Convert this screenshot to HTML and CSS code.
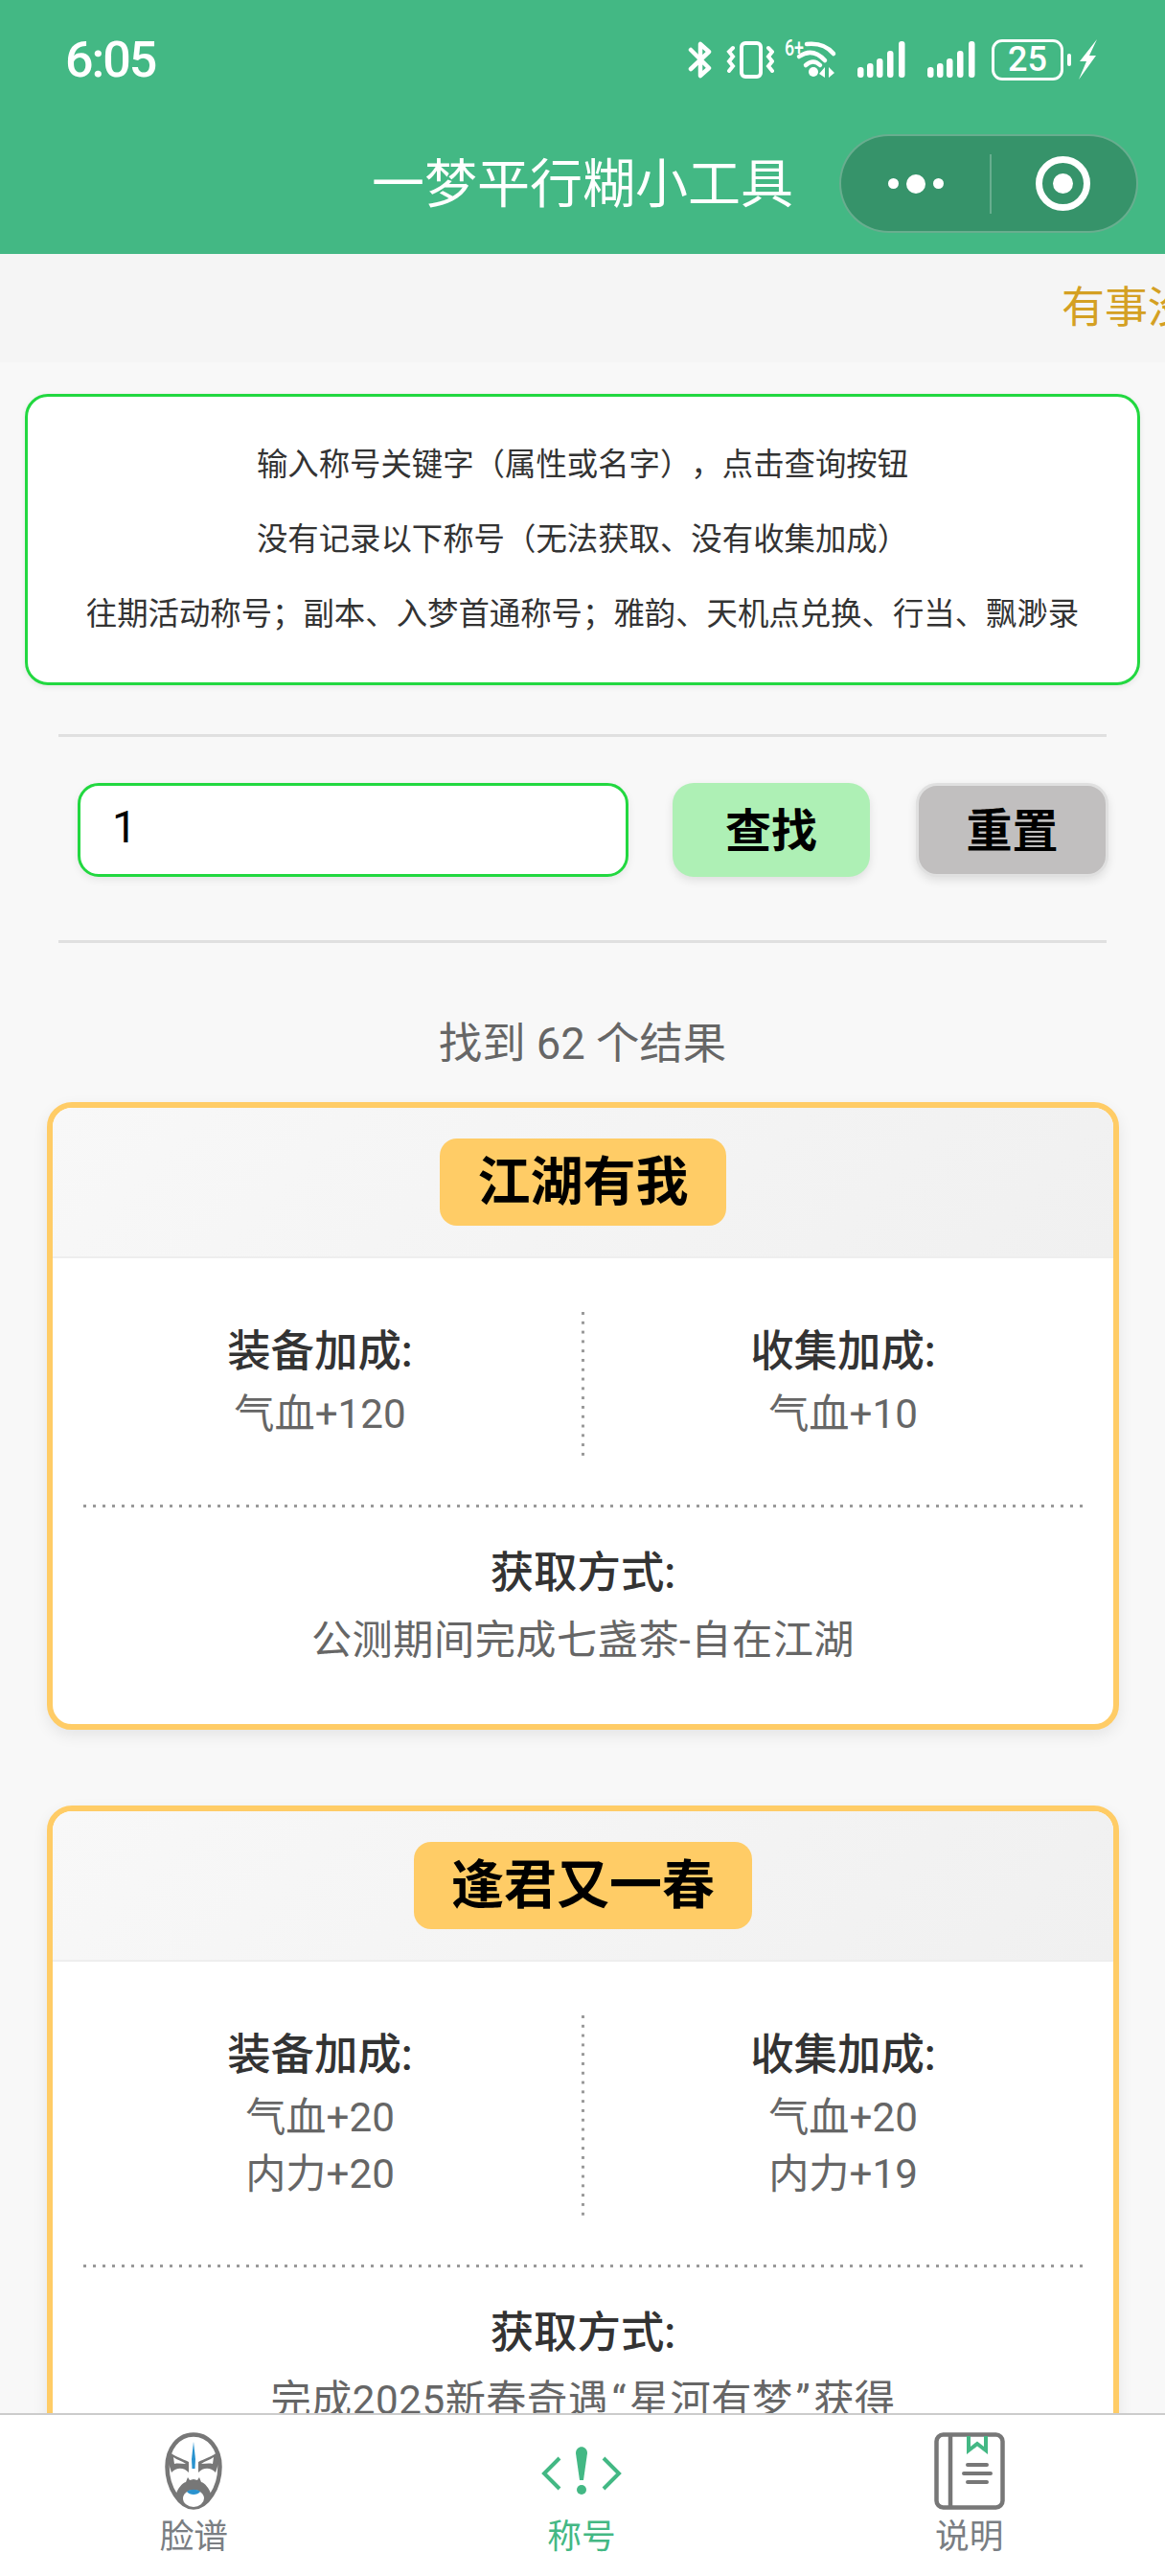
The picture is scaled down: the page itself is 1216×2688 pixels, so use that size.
FILE: index.html
```html
<!DOCTYPE html>
<html lang="zh-CN">
<head>
    <meta charset="UTF-8">
    <meta name="viewport" content="width=device-width, initial-scale=1.0">
    <title>一梦平行糊小工具</title>
    <link rel="stylesheet" href="styles.css">
</head>
<body>
    <div class="app">
        <header class="top">
            <div class="status">
                <span class="time">6:05</span>
                <div class="status-icons">
                    <svg class="ic-bt" width="25" height="42" viewBox="0 0 25 42" fill="none" stroke="#fff" stroke-width="4.5" stroke-linejoin="round" stroke-linecap="round">
                        <path d="M3 11 L22 30 L13 38 V24"/>
                        <path d="M3 31 L22 13 L13 5 V18"/>
                    </svg>
                    <svg class="ic-vib" width="50" height="42" viewBox="0 0 50 42" fill="none" stroke="#fff" stroke-width="4" stroke-linecap="round">
                        <rect x="16" y="4" width="20" height="35" rx="4"/>
                        <path d="M7 9 L3 13 L7 18 L3 23 L7 28 L3 33"/>
                        <path d="M44 9 L48 13 L44 18 L48 23 L44 28 L48 33"/>
                    </svg>
                    <svg class="ic-wifi" width="56" height="42" viewBox="0 0 56 42" fill="none" stroke="#fff" stroke-linecap="round">
                        <text x="1" y="17" class="wifi-six" textLength="20" lengthAdjust="spacingAndGlyphs">6+</text>
                        <path d="M24 5 Q42 3 52 15" stroke-width="4.5"/>
                        <path d="M16 18 Q30 8 43 22" stroke-width="4.5"/>
                        <path d="M23 27 Q31 20 38 27" stroke-width="4.5"/>
                        <circle cx="31" cy="34" r="5" fill="#fff" stroke="none"/>
                        <path d="M43 29 V40 L37 36Z M47 29 V40 L53 35Z" fill="#fff" stroke="none"/>
                    </svg>
                    <svg class="ic-sig" width="50" height="42" viewBox="0 0 50 42" fill="#fff">
                        <rect x="0" y="29" width="6.5" height="11" rx="3"/>
                        <rect x="10" y="25" width="6.5" height="15" rx="3"/>
                        <rect x="20" y="20" width="6.5" height="20" rx="3"/>
                        <rect x="31" y="12" width="6.5" height="28" rx="3"/>
                        <rect x="43" y="2" width="6.5" height="38" rx="3"/>
                    </svg>
                    <svg class="ic-sig" width="50" height="42" viewBox="0 0 50 42" fill="#fff">
                        <rect x="0" y="29" width="6.5" height="11" rx="3"/>
                        <rect x="10" y="25" width="6.5" height="15" rx="3"/>
                        <rect x="20" y="20" width="6.5" height="20" rx="3"/>
                        <rect x="31" y="12" width="6.5" height="28" rx="3"/>
                        <rect x="43" y="2" width="6.5" height="38" rx="3"/>
                    </svg>
                    <div class="battery">25</div>
                    <span class="battery-nub"></span>
                    <svg class="ic-bolt" width="20" height="42" viewBox="0 0 20 42" fill="#fff">
                        <path d="M20 0 L2 23 H9 L1 42 L19 17 H12 Z"/>
                    </svg>
                </div>
            </div>
            <div class="nav">
                <h1 class="nav-title">一梦平行糊小工具</h1>
                <div class="capsule">
                    <div class="capsule-dots">
                        <i class="dot"></i><i class="dot big"></i><i class="dot"></i>
                    </div>
                    <div class="capsule-sep"></div>
                    <div class="capsule-close"><i></i></div>
                </div>
            </div>
        </header>

        <main class="content">
            <div class="notice">有事没事多来看看公告</div>

            <div class="info">
                <p>输入称号关键字（属性或名字），点击查询按钮</p>
                <p>没有记录以下称号（无法获取、没有收集加成）</p>
                <p>往期活动称号；副本、入梦首通称号；雅韵、天机点兑换、行当、飘渺录</p>
            </div>

            <div class="line line-top"></div>
            <div class="search">
                <div class="search-input">1</div>
                <button class="btn btn-find">查找</button>
                <button class="btn btn-reset">重置</button>
            </div>
            <div class="line"></div>

            <div class="result-count">找到 62 个结果</div>

            <section class="card">
                <div class="card-head"><span class="badge">江湖有我</span></div>
                <div class="stats">
                    <div class="stat">
                        <div class="label">装备加成:</div>
                        <div class="value">气血+120</div>
                    </div>
                    <div class="stat">
                        <div class="label">收集加成:</div>
                        <div class="value">气血+10</div>
                    </div>
                </div>
                <div class="source">
                    <div class="label">获取方式:</div>
                    <div class="value source-text">公测期间完成七盏茶-自在江湖</div>
                </div>
            </section>

            <section class="card">
                <div class="card-head"><span class="badge">逢君又一春</span></div>
                <div class="stats">
                    <div class="stat">
                        <div class="label">装备加成:</div>
                        <div class="value">气血+20</div>
                        <div class="value">内力+20</div>
                    </div>
                    <div class="stat">
                        <div class="label">收集加成:</div>
                        <div class="value">气血+20</div>
                        <div class="value">内力+19</div>
                    </div>
                </div>
                <div class="source">
                    <div class="label">获取方式:</div>
                    <div class="value source-text">完成2025新春奇遇<span class="quote">“</span>星河有梦<span class="quote">”</span>获得</div>
                </div>
            </section>
        </main>

        <nav class="tabs">
            <div class="tab">
                <svg width="60" height="81" viewBox="0 0 60 81">
                    <path d="M30 2.5 C46 2.5 57.5 17 57.5 36 C57.5 58 44 78.5 30 78.5 C16 78.5 2.5 58 2.5 36 C2.5 17 14 2.5 30 2.5Z" fill="#fff" stroke="#777" stroke-width="4.5"/>
                    <path d="M4 20 C10 25 19 28 25 31 L25 42 C20 37 13 36 7 42 C4 34 3 27 4 20Z" fill="#777"/>
                    <path d="M56 20 C50 25 41 28 35 31 L35 42 C40 37 47 36 53 42 C56 34 57 27 56 20Z" fill="#777"/>
                    <path d="M9 26 C13 29 18 30 22 33 C18 33 14 32 10 33Z M51 26 C47 29 42 30 38 33 C42 33 46 32 50 33Z" fill="#fff"/>
                    <path d="M12 40 C16 37 20 38 23 42 C19 44 15 43 12 40Z M48 40 C44 37 40 38 37 42 C41 44 45 43 48 40Z" fill="#fff"/>
                    <path d="M30 10 L32 28 L31.5 38 H28.5 L28 28Z" fill="#2a93cf"/>
                    <path d="M11 66 C14 58 18 53 22 52 L24 47 L26 50 L30 49 L34 50 L36 47 L38 52 C42 53 46 58 49 66 C47 71 44 74 41 75 L19 75 C16 74 13 71 11 66Z" fill="#777"/>
                    <ellipse cx="30" cy="69" rx="11" ry="9" fill="#fff"/>
                    <path d="M23 62 C26 59 34 59 37 62 C34 66 26 66 23 62Z" fill="#2a93cf"/>
                </svg>
                <span>脸谱</span>
            </div>
            <div class="tab tab-on">
                <svg width="84" height="81" viewBox="0 0 84 81" fill="none" stroke="#43b884" stroke-width="4">
                    <path d="M19 27 L3 43 L19 59"/>
                    <path d="M65 27 L81 43 L65 59"/>
                    <path d="M36 22 C36 13 48 13 48 22 L44 50 H40Z" fill="#43b884" stroke="none"/>
                    <circle cx="42" cy="60" r="5" fill="#43b884" stroke="none"/>
                </svg>
                <span>称号</span>
            </div>
            <div class="tab">
                <svg width="74" height="81" viewBox="0 0 74 81" fill="none" stroke="#777">
                    <rect x="2.5" y="2.5" width="69" height="76" rx="7" stroke-width="4.5"/>
                    <path d="M17 2 V78" stroke-width="4.5"/>
                    <path d="M36 4 V19 L45 12 L54 19 V4" stroke="#43b884" stroke-width="4"/>
                    <path d="M35 34 H55 M31 43 H59 M35 52 H55" stroke-width="4" stroke-linecap="round"/>
                </svg>
                <span>说明</span>
            </div>
        </nav>
    </div>
</body>
</html>
```
FILE: styles.css
```css
* {
    box-sizing: border-box;
}

html, body {
    margin: 0;
    padding: 0;
}

body {
    background: #f8f8f8;
    font-family: Roboto, "Noto Sans CJK SC", sans-serif;
    color: #333;
    text-spacing-trim: space-all;
}

.app {
    display: flex;
    flex-direction: column;
    width: 1216px;
    height: 2688px;
    overflow: hidden;
}

/* header */
.top {
    flex: none;
    height: 265px;
    background: #43b884;
    color: #fff;
}

.status {
    display: flex;
    justify-content: space-between;
    align-items: center;
    height: 124px;
    padding: 0 71px 0 68px;
}

.time {
    font-size: 52px;
    font-weight: 500;
    letter-spacing: -2px;
}

.status-icons {
    display: flex;
    align-items: center;
}

.status-icons svg {
    display: block;
}

.ic-vib {
    margin-left: 15px;
}

.ic-wifi {
    margin-left: 10px;
}

.wifi-six {
    font-size: 23px;
    font-weight: 500;
    fill: #fff;
    stroke: none;
}

.ic-sig {
    margin-left: 23px;
}

.ic-wifi + .ic-sig {
    margin-left: 21px;
}

.battery {
    width: 75px;
    height: 43px;
    margin-left: 17px;
    border: 3px solid #fff;
    border-radius: 11px;
    font-size: 36px;
    font-weight: 500;
    line-height: 37px;
    text-align: center;
}

.battery-nub {
    width: 4px;
    height: 13px;
    margin-left: 4px;
    background: #fff;
    border-radius: 2px;
}

.ic-bolt {
    margin-left: 7px;
}

.nav {
    position: relative;
    display: flex;
    justify-content: center;
    align-items: center;
    height: 141px;
    padding-bottom: 6px;
}

.nav-title {
    margin: 0;
    font-size: 55px;
    font-weight: 400;
    line-height: 70px;
}

.capsule {
    position: absolute;
    top: 16px;
    right: 28px;
    display: flex;
    align-items: center;
    width: 312px;
    height: 103px;
    background: #36936a;
    border: 2px solid rgba(255, 255, 255, 0.25);
    border-radius: 52px;
}

.capsule-dots {
    display: flex;
    justify-content: center;
    align-items: center;
    gap: 8px;
    width: 155px;
}

.dot {
    width: 11px;
    height: 11px;
    background: #fff;
    border-radius: 50%;
}

.dot.big {
    width: 20px;
    height: 20px;
}

.capsule-sep {
    width: 2px;
    height: 62px;
    background: rgba(255, 255, 255, 0.25);
}

.capsule-close {
    display: flex;
    justify-content: center;
    align-items: center;
    flex: 1;
    padding-right: 3px;
}

.capsule-close i {
    display: flex;
    justify-content: center;
    align-items: center;
    width: 57px;
    height: 57px;
    border: 7px solid #fff;
    border-radius: 50%;
}

.capsule-close i::after {
    content: "";
    width: 21px;
    height: 21px;
    background: #fff;
    border-radius: 50%;
}

/* main area */
.content {
    flex: 1;
    min-height: 0;
    overflow: hidden;
}

.notice {
    height: 113px;
    padding-left: 1108px;
    background: #f5f5f5;
    color: #d4a023;
    font-size: 45px;
    line-height: 113px;
    white-space: nowrap;
    overflow: hidden;
}

.info {
    margin: 33px 26px 0;
    padding: 32px 10px;
    background: #fff;
    border: 3px solid #22d840;
    border-radius: 24px;
    box-shadow: 0 2px 6px rgba(0, 0, 0, 0.08);
    text-align: center;
    font-size: 32.4px;
    line-height: 78px;
    color: #333;
}

.info p {
    margin: 0;
}

.line {
    height: 3px;
    margin: 0 61px;
    background: #e0e0e0;
}

.line-top {
    margin-top: 51px;
}

.search {
    display: flex;
    align-items: stretch;
    height: 98px;
    margin: 48px 59px 66px 81px;
}

.search-input {
    width: 575px;
    padding-left: 33px;
    background: #fff;
    border: 3px solid #22d840;
    border-radius: 22px;
    box-shadow: 0 3px 8px rgba(0, 0, 0, 0.08);
    color: #000;
    font-size: 46px;
    line-height: 86px;
}

.btn {
    border: none;
    border-radius: 22px;
    box-shadow: 0 4px 10px rgba(0, 0, 0, 0.1);
    color: #000;
    font-family: inherit;
    font-size: 48px;
    font-weight: 700;
    padding: 0 0 6px;
}

.btn-find {
    width: 206px;
    margin-left: 46px;
    background: #aef0b5;
}

.btn-reset {
    width: 201px;
    margin-left: 48px;
    background: #c1bfbf;
    border: 3px solid #e0e0e0;
}

.result-count {
    margin: 76px 0 30px;
    text-align: center;
    color: #666;
    font-size: 45.4px;
    line-height: 60px;
}

/* title cards */
.card {
    margin: 0 48px 79px 49px;
    background: #fff;
    border: 6px solid #ffcc66;
    border-radius: 26px;
    box-shadow: 0 6px 16px rgba(0, 0, 0, 0.08);
    overflow: hidden;
}

.card-head {
    display: flex;
    justify-content: center;
    padding: 32px 0;
    background: linear-gradient(135deg, #f8f8f8, #f0f0f0);
    border-bottom: 2px solid #eee;
}

.badge {
    padding: 0 39px;
    background: #ffcc66;
    border-radius: 18px;
    color: #000;
    font-size: 55px;
    font-weight: 700;
    line-height: 91px;
}

.stats {
    display: grid;
    grid-template-columns: 1fr 1fr;
    margin: 56px 9px 49px 6px;
}

.stat {
    padding: 12px 0 16px;
    text-align: center;
}

/* the dots are square and sparse, a dotted border comes out too tight */
.stat + .stat {
    background: linear-gradient(#999 33%, transparent 0) left top / 3px 9.8px repeat-y;
}

.label {
    color: #333;
    font-size: 45.4px;
    font-weight: 500;
    line-height: 59px;
}

.stat .label {
    margin-bottom: 6px;
}

.value {
    color: #666;
    font-size: 42.2px;
    line-height: 59px;
}

.source {
    margin: 0 32px;
    padding: 42px 0 58px;
    background: linear-gradient(to right, #999 30%, transparent 0) left top / 10px 3px repeat-x;
    text-align: center;
}

.source-text {
    margin-top: 11px;
    letter-spacing: 0.5px;
}

.quote {
    margin: 0 3px;
}

/* tab bar */
.tabs {
    flex: none;
    display: grid;
    grid-template-columns: repeat(3, 1fr);
    height: 170px;
    padding: 18px 2px 0 0;
    background: #fff;
    border-top: 2px solid #ccc;
}

.tab {
    display: flex;
    flex-direction: column;
    align-items: center;
    color: #7a7e83;
    font-size: 35.7px;
    line-height: 50px;
}

.tab svg {
    display: block;
    margin-bottom: 3px;
}

.tab-on {
    color: #43b884;
}
```
